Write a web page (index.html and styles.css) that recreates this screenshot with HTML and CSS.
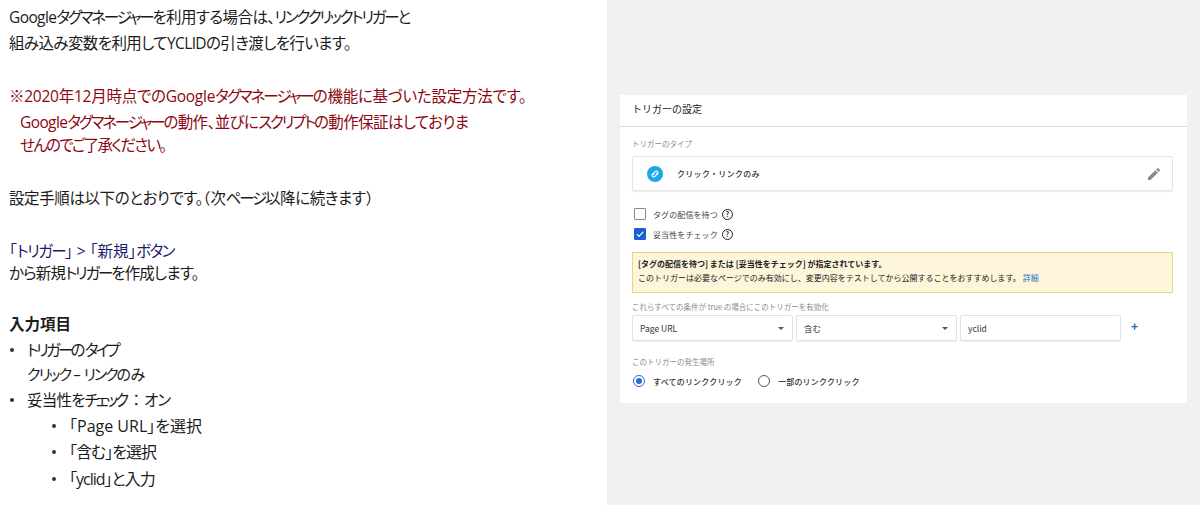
FILE: index.html
```html
<!DOCTYPE html>
<html lang="ja">
<head>
<meta charset="utf-8">
<title>トリガーの設定</title>
<link rel="stylesheet" href="styles.css">
</head>
<body>
<div class="slide">
  <main class="doc">
    <p class="para">Google<span class="k">タグマネージャー</span>を利用する場合は、<span class="k">リンククリックトリガー</span>と<br>組み込み変数を利用してYCLIDの引き渡しを行います。</p>
    <div class="note">
      <p class="note-lead">※2020年12月時点でのGoogle<span class="k">タグマネージャー</span>の機能に基づいた設定方法です。</p>
      <p class="note-body">Google<span class="k">タグマネージャー</span>の動作、並びに<span class="k">スクリプト</span>の動作保証はしておりま</p>
      <p class="note-tail">せんのでご了承ください。</p>
    </div>
    <p class="para steps">設定手順は以下のとおりです。<span class="fw">（</span>次<span class="k">ページ</span>以降に続きます<span class="fw">）</span></p>
    <div class="create">
      <p class="create-link">「<span class="k">トリガー</span>」&nbsp;&gt;&nbsp;「新規」<span class="k">ボタン</span></p>
      <p class="create-text">から新規<span class="k">トリガー</span>を作成します。</p>
    </div>
    <h2 class="items-title">入力項目</h2>
    <ul class="items">
      <li class="item"><span class="item-line"><span class="k">トリガー</span>の<span class="k">タイプ</span></span><span class="item-sub"><span class="k">クリック</span>&nbsp;–&nbsp;<span class="k">リンク</span>のみ</span></li>
      <li class="item second"><span class="item-line">妥当性を<span class="k">チェッ</span>ク<span class="fw colon">：</span>オン</span>
        <ul class="subitems">
          <li class="subitem">「Page URL」を選択</li>
          <li class="subitem narrow">「含む」を選択</li>
          <li class="subitem narrow">「yclid」と入力</li>
        </ul>
      </li>
    </ul>
  </main>
  <aside class="side">
    <section class="card">
      <header class="card-head">トリガーの設定</header>
      <div class="card-body">
        <div class="label type-label">トリガーのタイプ</div>
        <div class="type-box">
          <span class="type-icon">
            <svg viewBox="0 0 16 16" width="16" height="16"><circle cx="8" cy="8" r="8" fill="#1ea7e8"/><path d="M7 9.2a2 2 0 0 1 0-2.6l1.2-1.2a1.9 1.9 0 0 1 2.6 2.6l-.7.7M9 6.8a2 2 0 0 1 0 2.6l-1.2 1.2a1.9 1.9 0 0 1-2.6-2.6l.7-.7" fill="none" stroke="#fff" stroke-width="1.1"/></svg>
          </span>
          <span class="type-name">クリック・リンクのみ</span>
          <svg class="pencil" viewBox="0 0 24 24" width="16" height="16"><path fill="#8a8a8a" d="M3 17.25V21h3.75L17.81 9.94l-3.75-3.75L3 17.25zM20.71 7.04a1 1 0 0 0 0-1.41l-2.34-2.34a1 1 0 0 0-1.41 0l-1.83 1.83 3.75 3.75 1.83-1.83z"/></svg>
        </div>
        <div class="check-row first">
          <span class="box"></span><span class="check-text">タグの配信を待つ</span><span class="help">?</span>
        </div>
        <div class="check-row">
          <span class="box checked"><svg viewBox="0 0 12 12" width="12" height="12"><path d="M2.2 6.2l2.6 2.6 5-5.4" fill="none" stroke="#fff" stroke-width="1.4"/></svg></span><span class="check-text">妥当性をチェック</span><span class="help">?</span>
        </div>
        <div class="warn">
          <div class="warn-title">[タグの配信を待つ] または [妥当性をチェック] が指定されています。</div>
          <div class="warn-text">このトリガーは必要なページでのみ有効にし、変更内容をテストしてから公開することをおすすめします。<span class="warn-link">詳細</span></div>
        </div>
        <div class="label cond-label">これらすべての条件が true の場合にこのトリガーを有効化</div>
        <div class="cond-row">
          <div class="field select">Page URL<span class="caret"></span></div>
          <div class="field select">含む<span class="caret"></span></div>
          <div class="field input">yclid</div>
          <span class="plus">+</span>
        </div>
        <div class="label where-label">このトリガーの発生場所</div>
        <div class="radio-row">
          <span class="radio on"></span><span class="radio-text">すべてのリンククリック</span>
          <span class="radio"></span><span class="radio-text">一部のリンククリック</span>
        </div>
      </div>
    </section>
  </aside>
</div>
</body>
</html>
```
FILE: styles.css
```css
html, body { margin: 0; padding: 0; }
body {
  width: 1200px;
  height: 505px;
  overflow: hidden;
  background: #fff;
  font-family: "Noto Sans CJK JP", "Noto Sans", sans-serif;
  color: #1c1c1c;
}
p, h2, ul { margin: 0; padding: 0; }
ul { list-style: none; }
.slide { display: flex; height: 505px; }

.doc {
  width: 607px;
  box-sizing: border-box;
  padding: 4px 0 0 9px;
  font-family: "Open Sans", "Noto Sans CJK JP", sans-serif;
  font-size: 15.5px;
  line-height: 26px;
  font-feature-settings: "palt";
  letter-spacing: -0.6px;
}
.k { letter-spacing: -2.2px; }
.fw { font-feature-settings: normal; letter-spacing: 0; }
.para { margin-bottom: 27px; }
.note { color: #8c0712; margin-bottom: 30px; }
.note-lead { letter-spacing: -0.25px; }
.note-lead .k { letter-spacing: -2px; }
.note-body { padding-left: 11px; }
.note-tail { padding-left: 11px; line-height: 20px; letter-spacing: -1.7px; }
.steps { letter-spacing: -0.4px; margin-bottom: 30px; }
.create { margin-bottom: 26px; }
.create-link { color: #1b1d6c; line-height: 21px; letter-spacing: 0; }
.create-link .k { letter-spacing: -1.6px; }
.create-text { line-height: 23px; letter-spacing: -0.8px; }
.items-title { font-size: 15.5px; font-weight: 700; line-height: 26px; letter-spacing: 0; }
.item { position: relative; padding-left: 18px; }
.item::before, .subitem::before {
  content: "";
  position: absolute;
  width: 4px;
  height: 4px;
  border-radius: 50%;
  background: #333;
}
.item::before { left: 1px; top: 11px; }
.item-line, .item-sub { display: block; }
.item-line .k { letter-spacing: -2.8px; }
.item-sub { line-height: 22px; font-size: 15px; }
.item-sub .k { letter-spacing: -2px; }
.second { margin-top: 2px; }
.second .item-line { letter-spacing: -0.8px; }
.subitems { margin-left: 42px; letter-spacing: 0; }
.subitem { position: relative; font-size: 16px; }
.narrow { letter-spacing: -1px; }
.subitem::before { left: -17px; top: 11px; }
.subitem:last-child { margin-top: 1px; }

.side {
  flex: 1;
  background: #f1f1f1;
  padding: 95px 13px 0;
}
.card { background: #fff; height: 308px; width: 567px; font-size: 8px; }
.card-head {
  height: 31px;
  line-height: 27px;
  padding-left: 12px;
  font-size: 10px;
  border-bottom: 1px solid #ddd;
}
.card-body { padding: 0 14px 0 12px; }
.label { color: #8a8a8a; font-size: 7.5px; line-height: 12px; }
.type-label { padding-top: 11px; }
.type-box {
  display: flex;
  align-items: center;
  height: 35px;
  box-sizing: border-box;
  margin-top: 6px;
  border: 1px solid #e4e4e4;
  border-radius: 2px;
  box-shadow: 0 1px 1px #ececec;
}
.type-icon { display: flex; margin-left: 14px; }
.type-name { margin-left: 14px; font-size: 8px; letter-spacing: .3px; font-weight: 500; color: #333; }
.pencil { margin-left: auto; margin-right: 10px; }
.check-row { display: flex; align-items: center; height: 20px; }
.check-row.first { margin-top: 13px; }
.box {
  width: 10px;
  height: 10px;
  border: 1px solid #888;
  border-radius: 1px;
  margin: 0 7px 0 2px;
  display: flex;
  align-items: center;
  justify-content: center;
}
.box.checked { background: #1b5fd6; border-color: #1b5fd6; }
.check-text { font-size: 8px; letter-spacing: .1px; color: #444; }
.help {
  width: 9px;
  height: 9px;
  border: 1px solid #222;
  border-radius: 50%;
  margin-left: 4px;
  font-size: 7px;
  line-height: 9px;
  text-align: center;
  font-weight: 700;
}
.warn {
  margin-top: 8px;
  height: 41px;
  box-sizing: border-box;
  background: #fdf6da;
  border: 1px solid #e9d67f;
  padding: 4px 5px;
  font-size: 8px;
  line-height: 14px;
  color: #222;
}
.warn-title { font-weight: 700; }
.warn-link { color: #2f6fc0; margin-left: 2px; }
.cond-label { margin-top: 8px; }
.cond-row { display: flex; align-items: center; margin-top: 2px; }
.field {
  width: 161px;
  height: 26px;
  box-sizing: border-box;
  border: 1px solid #e2e2e2;
  border-radius: 2px;
  font-size: 8.5px;
  line-height: 24px;
  padding-left: 7px;
  color: #333;
  margin-right: 3px;
  position: relative;
  box-shadow: 0 1px 1px #efefef;
}
.caret {
  position: absolute;
  right: 8px;
  top: 11px;
  border-left: 3px solid transparent;
  border-right: 3px solid transparent;
  border-top: 3px solid #555;
}
.plus { color: #2b63b8; font-size: 12px; font-weight: 700; margin: 0 0 5px 7px; }
.where-label { margin-top: 15px; }
.radio-row { display: flex; align-items: center; margin-top: 7px; padding-left: 1px; }
.radio {
  width: 10px;
  height: 10px;
  border: 1px solid #555;
  border-radius: 50%;
  position: relative;
}
.radio.on { border-color: #2b6ad0; }
.radio.on::after {
  content: "";
  position: absolute;
  left: 2px;
  top: 2px;
  width: 6px;
  height: 6px;
  border-radius: 50%;
  background: #2b6ad0;
}
.radio-text { margin: 0 16px 0 8px; font-size: 8px; letter-spacing: .2px; color: #333; font-weight: 500; }
```
